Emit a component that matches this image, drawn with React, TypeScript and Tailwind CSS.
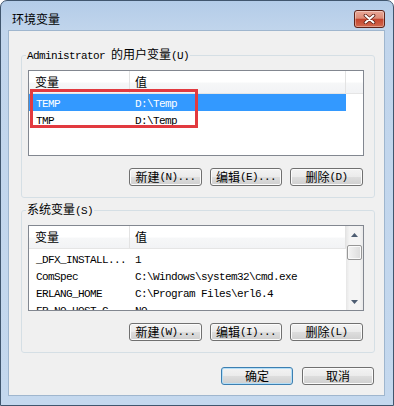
import React from "react";

function M({ children }: { children: React.ReactNode }) {
  return (
    <span className="font-['Liberation_Mono',monospace] text-[11px] tracking-[-0.6px]">
      {children}
    </span>
  );
}

function Btn({
  cjk,
  mono,
  w,
  def,
}: {
  cjk: string;
  mono?: string;
  w: string;
  def?: boolean;
}) {
  return (
    <div
      className={
        (def
          ? "border-[#3c7fb1] shadow-[inset_0_0_0_1px_#b4def7] "
          : "border-[#707070] shadow-[inset_0_0_0_1px_#fbfbfb] ") +
        w +
        " h-[18px] rounded-[3px] border bg-[linear-gradient(#f3f3f3_0%,#ebebeb_48%,#dddddd_52%,#cfcfcf_100%)] flex items-center justify-center leading-[16px] text-[12px] text-black"
      }
    >
      <span>{cjk}</span>
      {mono ? <M>{mono}</M> : null}
    </div>
  );
}

function Header({ withScrollCol }: { withScrollCol: boolean }) {
  return (
    <div className="flex h-[23px] shrink-0 border-b border-[#e5e5e5] bg-[linear-gradient(#ffffff_0%,#ffffff_50%,#f6f7f8_55%,#f2f3f5_100%)] text-[12px] leading-[16px]">
      <div className="w-[101px] pl-[6px] border-r border-[#e3e3e3] flex items-center">
        变量
      </div>
      <div className="w-[216px] pl-[5px] border-r border-[#e3e3e3] flex items-center">
        值
      </div>
      {withScrollCol ? <div className="flex-1" /> : null}
    </div>
  );
}

function Row({
  name,
  value,
  selected,
}: {
  name: string;
  value: string;
  selected?: boolean;
}) {
  return (
    <div
      className={
        (selected ? "bg-[#3399ff] text-white " : "text-black ") +
        "flex h-[17px] w-[317px] items-center leading-[17px] shrink-0"
      }
    >
      <div className="w-[101px] pl-[7px] whitespace-nowrap">
        <M>{name}</M>
      </div>
      <div className="pl-[5px] whitespace-nowrap">
        <M>{value}</M>
      </div>
    </div>
  );
}

function Arrow({ up }: { up: boolean }) {
  return (
    <svg width="7" height="4" viewBox="0 0 7 4">
      {up ? (
        <path d="M0 4 L3.5 0 L7 4 Z" fill="#4d5d72" />
      ) : (
        <path d="M0 0 L3.5 4 L7 0 Z" fill="#4d5d72" />
      )}
    </svg>
  );
}

export default function App() {
  return (
    <div className="w-[394px] h-[406px] overflow-hidden rounded-t-[7px] border border-[#40566e] bg-[linear-gradient(180deg,#b3cce8_0px,#c1d5ec_30px,#c4d8ee_100%)] flex flex-col font-['Noto_Sans_CJK_SC',sans-serif] text-black">
      {/* title bar */}
      <div className="h-[29px] flex items-start justify-between pt-[9px] pl-[11px] pr-[8px] shrink-0">
        <div className="h-[17px] leading-[17px] text-[12px] text-black">环境变量</div>
        <div className="w-[31px] h-[18px] rounded-[3px] border border-[#5e2218] bg-[linear-gradient(#eaa898_0%,#dc8b76_45%,#c4442d_52%,#d26a50_100%)] shadow-[inset_0_0_0_1px_rgba(255,255,255,0.35)] flex items-center justify-center">
          <svg width="13" height="10" viewBox="0 0 13 10">
            <path
              d="M2.5 1.5 L10.5 8.5 M10.5 1.5 L2.5 8.5"
              stroke="#5a1c12"
              strokeWidth="3.6"
              strokeLinecap="round"
            />
            <path
              d="M2.5 1.5 L10.5 8.5 M10.5 1.5 L2.5 8.5"
              stroke="#ffffff"
              strokeWidth="2"
              strokeLinecap="round"
            />
          </svg>
        </div>
      </div>

      {/* client area */}
      <div className="ml-[7px] w-[377px] h-[366px] bg-[#f0f0f0] border border-[#9fb6ce] flex flex-col shrink-0">
        {/* user variables */}
        <fieldset className="mt-[15px] ml-[12px] w-[354px] border border-[#d5dfe5] rounded-[3px] pt-[6px] pb-[11px] flex flex-col">
          <legend className="ml-[4px] px-[1px] leading-[16px] text-[12px] whitespace-nowrap">
            <M>Administrator </M>
            <span>的用户变量</span>
            <M>(U)</M>
          </legend>
          <div className="relative ml-[6px] w-[336px] h-[86px] border border-[#828790] bg-white flex flex-col">
            <Header withScrollCol={true} />
            <Row name="TEMP" value={"D:\\Temp"} selected />
            <Row name="TMP" value={"D:\\Temp"} />
            <div className="absolute left-[1px] top-[18px] w-[168px] h-[39px] border-[3px] border-[#e23a3f]" />
          </div>
          <div className="ml-[6px] w-[336px] mt-[12px] flex justify-end gap-[8px] pr-[1px]">
            <Btn cjk="新建" mono="(N)..." w="w-[73px]" />
            <Btn cjk="编辑" mono="(E)..." w="w-[72px]" />
            <Btn cjk="删除" mono="(D)" w="w-[73px]" />
          </div>
        </fieldset>

        {/* system variables */}
        <fieldset className="mt-[3px] ml-[12px] w-[354px] border border-[#d5dfe5] rounded-[3px] pt-[6px] pb-[11px] flex flex-col">
          <legend className="ml-[4px] px-[1px] leading-[16px] text-[12px] whitespace-nowrap">
            <span>系统变量</span>
            <M>(S)</M>
          </legend>
          <div className="ml-[6px] w-[336px] h-[86px] border border-[#828790] bg-white flex overflow-hidden">
            <div className="w-[317px] flex flex-col overflow-hidden">
              <Header withScrollCol={false} />
              <div className="h-[1px] shrink-0" />
              <Row name="_DFX_INSTALL..." value="1" />
              <Row name="ComSpec" value={"C:\\Windows\\system32\\cmd.exe"} />
              <Row name="ERLANG_HOME" value={"C:\\Program Files\\erl6.4"} />
              <Row name="FP_NO_HOST_C" value="NO" />
            </div>
            <div className="w-[17px] flex flex-col bg-[linear-gradient(90deg,#e6e6e6,#f4f4f4_20%,#f4f4f4_80%,#e9e9e9)]">
              <div className="h-[17px] flex items-center justify-center">
                <Arrow up={true} />
              </div>
              <div className="flex-1 pt-[2px] px-[1px]">
                <div className="h-[15px] rounded-[2px] border border-[#979797] bg-[linear-gradient(90deg,#f4f4f4,#e8e8e8_50%,#dcdcdc)] shadow-[inset_0_0_0_1px_#fafafa]" />
              </div>
              <div className="h-[17px] flex items-center justify-center">
                <Arrow up={false} />
              </div>
            </div>
          </div>
          <div className="ml-[6px] w-[336px] mt-[12px] flex justify-end gap-[8px] pr-[1px]">
            <Btn cjk="新建" mono="(W)..." w="w-[73px]" />
            <Btn cjk="编辑" mono="(I)..." w="w-[72px]" />
            <Btn cjk="删除" mono="(L)" w="w-[73px]" />
          </div>
        </fieldset>

        {/* OK / Cancel */}
        <div className="mt-[14px] ml-[212px] flex gap-[9px]">
          <Btn cjk="确定" w="w-[72px]" def />
          <Btn cjk="取消" w="w-[72px]" />
        </div>
      </div>
    </div>
  );
}
